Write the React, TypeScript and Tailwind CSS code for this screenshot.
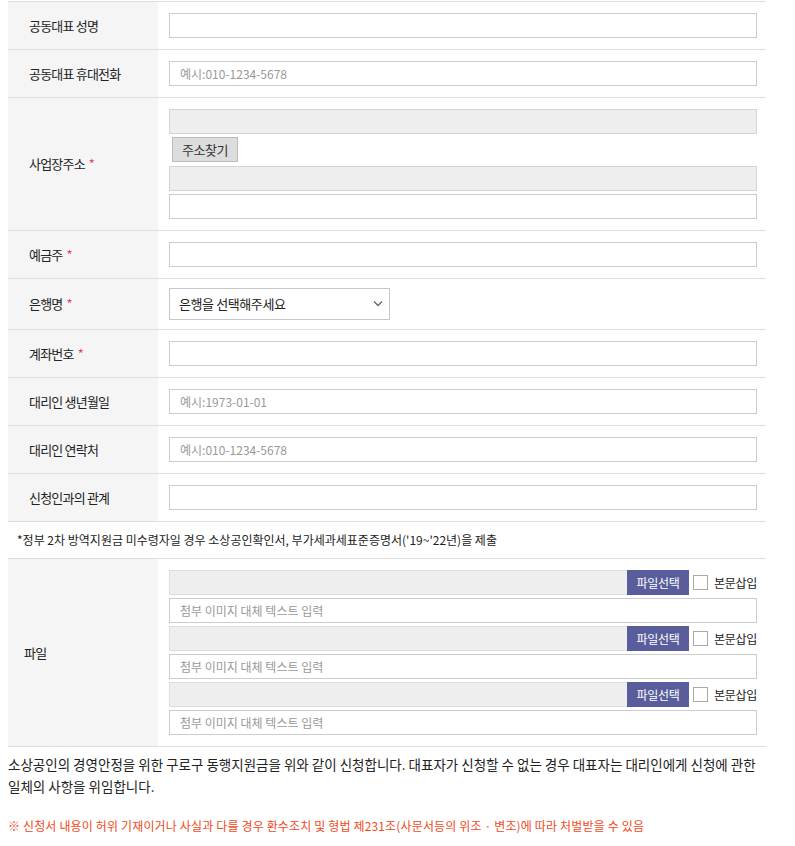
import React from "react";

const font = "font-['Malgun_Gothic','Noto_Sans_CJK_KR',sans-serif]";

const Req = () => <span className="ml-1 text-[#e8436c]">*</span>;

const TextInput = ({
  placeholder,
  gray,
}: {
  placeholder?: string;
  gray?: boolean;
}) => (
  <input
    type="text"
    readOnly={gray}
    placeholder={placeholder}
    className={`block h-[25px] w-full border px-[10px] text-[12px] text-[#222] placeholder:text-[#999] outline-none ${
      gray ? "border-[#d4d4d4] bg-[#eeeeee]" : "border-[#cccccc] bg-white"
    }`}
  />
);

const Label = ({
  label,
  required,
  pad = "pl-[21px]",
}: {
  label: string;
  required?: boolean;
  pad?: string;
}) => (
  <th
    className={`w-[150px] bg-[#f5f5f5] ${pad} text-left text-[13px] font-normal tracking-[-0.8px] text-[#222]`}
  >
    {label}
    {required && <Req />}
  </th>
);

const Row = ({
  label,
  required,
  children,
}: {
  label: string;
  required?: boolean;
  children: React.ReactNode;
}) => (
  <tr className="border-b border-[#dddddd]">
    <Label label={label} required={required} />
    <td className="py-[11px] pl-[11px] pr-[9px]">{children}</td>
  </tr>
);

const FileSlot = () => (
  <div className="flex flex-col gap-[3px]">
    <div className="flex items-center">
      <div className="h-[25px] flex-1 border border-r-0 border-[#dddddd] bg-[#eeeeee]" />
      <button className="h-[25px] w-[62px] bg-[#5a5d9c] text-[12px] tracking-[-0.3px] text-white">
        파일선택
      </button>
      <label className="ml-[4px] flex items-center gap-[6px] text-[12px] tracking-[-0.3px] text-[#222]">
        <span className="h-[15px] w-[15px] border border-[#aaaaaa] bg-white" />
        본문삽입
      </label>
    </div>
    <TextInput placeholder="첨부 이미지 대체 텍스트 입력" />
  </div>
);

export default function App() {
  return (
    <div className={`${font} bg-white pt-px pl-[8px] pr-[29px] pb-[20px]`}>
      <table className="w-full border-collapse border-t border-[#dddddd]">
        <tbody>
          <Row label="공동대표 성명">
            <TextInput />
          </Row>
          <Row label="공동대표 휴대전화">
            <TextInput placeholder="예시:010-1234-5678" />
          </Row>
          <Row label="사업장주소" required>
            <div className="flex flex-col">
              <TextInput gray />
              <button className="mt-[3px] ml-[3px] h-[25px] w-[66px] border border-[#bbbbbb] bg-[#dddddd] text-[13px] tracking-[-0.5px] text-[#333]">
                주소찾기
              </button>
              <div className="mt-[4px]">
                <TextInput gray />
              </div>
              <div className="mt-[3px]">
                <TextInput />
              </div>
            </div>
          </Row>
          <Row label="예금주" required>
            <TextInput />
          </Row>
          <tr className="border-b border-[#dddddd]">
            <Label label="은행명" required />
            <td className="py-[9px] pl-[11px] pr-[9px]">
              <div className="relative w-[221px]">
                <select className="block h-[32px] w-full appearance-none border border-[#c4c6d0] bg-white pl-[9px] text-[13px] tracking-[-0.4px] text-[#222] outline-none">
                  <option>은행을 선택해주세요</option>
                </select>
                <svg
                  className="pointer-events-none absolute right-[7px] top-[12px]"
                  width="10"
                  height="7"
                  viewBox="0 0 10 7"
                  fill="none"
                  stroke="#666"
                  strokeWidth="1.3"
                >
                  <polyline points="1 1.5 5 5.5 9 1.5" />
                </svg>
              </div>
            </td>
          </tr>
          <Row label="계좌번호" required>
            <TextInput />
          </Row>
          <Row label="대리인 생년월일">
            <TextInput placeholder="예시:1973-01-01" />
          </Row>
          <Row label="대리인 연락처">
            <TextInput placeholder="예시:010-1234-5678" />
          </Row>
          <Row label="신청인과의 관계">
            <TextInput />
          </Row>
          <tr className="border-b border-[#dddddd]">
            <td colSpan={2} className="h-[37px] pl-[9px] text-[12px] text-[#222]">
              *정부 2차 방역지원금 미수령자일 경우 소상공인확인서, 부가세과세표준증명서('19~'22년)을 제출
            </td>
          </tr>
          <tr className="border-b border-[#dddddd]">
            <Label label="파일" pad="pl-[16px]" />
            <td className="py-[11px] pl-[11px] pr-[9px]">
              <div className="flex flex-col gap-[3px]">
                <FileSlot />
                <FileSlot />
                <FileSlot />
              </div>
            </td>
          </tr>
        </tbody>
      </table>
      <p className="mt-[6px] break-keep text-[13.5px] leading-[22px] text-[#222]">
        소상공인의 경영안정을 위한 구로구 동행지원금을 위와 같이 신청합니다. 대표자가 신청할 수 없는 경우 대표자는 대리인에게 신청에 관한 일체의 사항을 위임합니다.
      </p>
      <p className="mt-[18px] text-[12px] leading-[22px] tracking-[0.15px] text-[#f04a1a]">
        ※ 신청서 내용이 허위 기재이거나 사실과 다를 경우 환수조치 및 형법 제231조(사문서등의 위조 · 변조)에 따라 처벌받을 수 있음
      </p>
    </div>
  );
}
